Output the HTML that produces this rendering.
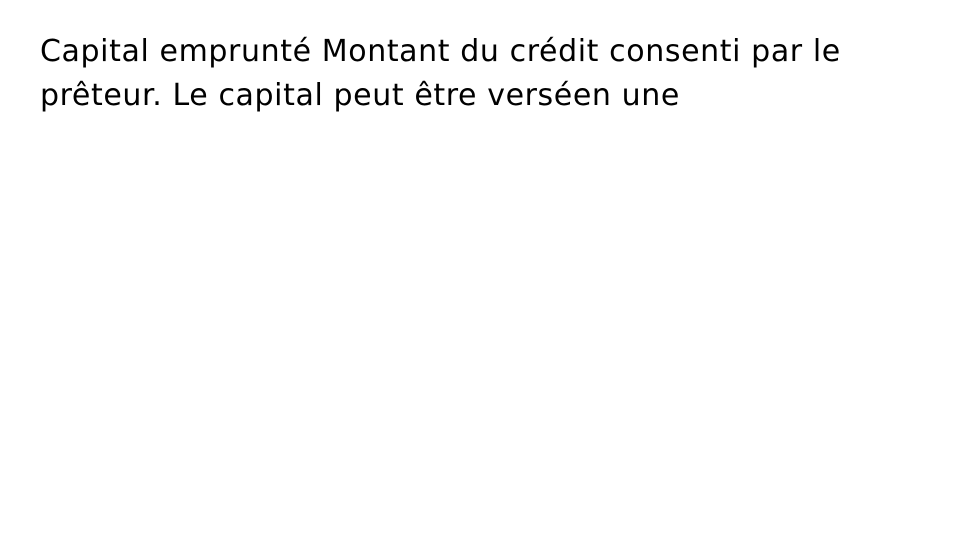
<!DOCTYPE html>
<html><head><meta charset="utf-8"><style>
html,body{margin:0;padding:0;background:#fff;width:960px;height:540px;overflow:hidden}
.t{position:absolute;left:40px;top:30px;font-family:"DejaVu Sans",sans-serif;font-size:30px;line-height:44px;color:#000;white-space:nowrap;letter-spacing:0.6px}
</style></head><body>
<div class="t">Capital emprunté Montant du crédit consenti par le<br>prêteur. Le capital peut être verséen une</div>
</body></html>
